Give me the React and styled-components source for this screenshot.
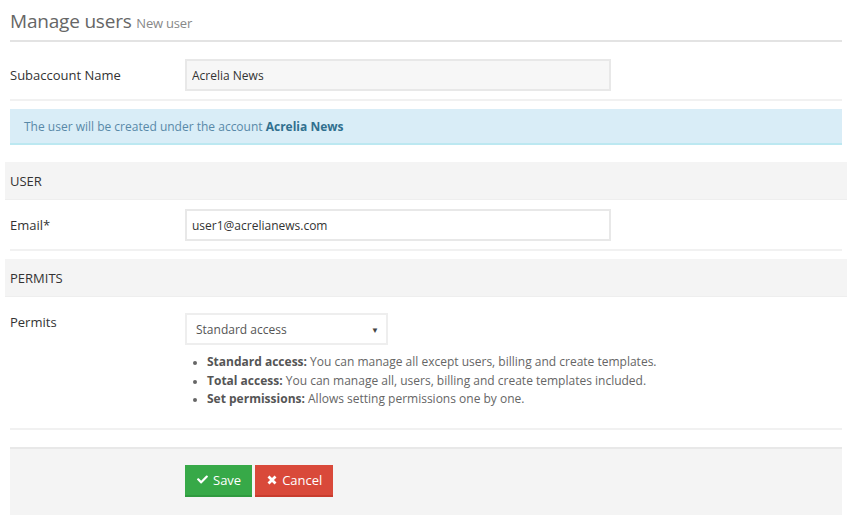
import React from 'react';
import styled, { createGlobalStyle } from 'styled-components';
import { FaCheck } from 'react-icons/fa';

const GlobalStyle = createGlobalStyle`
  body {
    margin: 0;
    background: #fff;
    font-family: 'Open Sans', 'Noto Sans', sans-serif;
    font-size: 13px;
    color: #333;
  }
`;

const Page = styled.div`
  padding: 0 3px 0 5px;
`;

const Header = styled.h1`
  margin: 0 5px;
  padding: 9px 0 5px;
  font-weight: 400;
  font-size: 19px;
  line-height: 24px;
  color: #666;
  border-bottom: 2px solid #e3e3e3;
  letter-spacing: -0.2px;
`;

const SubTitle = styled.small`
  font-size: 13px;
  color: #888;
  letter-spacing: -0.2px;
`;

const Row = styled.div`
  display: flex;
  align-items: ${p => (p.$top ? 'flex-start' : 'center')};
  margin: 0 5px;
  padding: ${p => p.$pad || '0'};
  border-bottom: 2px solid #f1f1f1;
`;

const Label = styled.label`
  width: 175px;
  flex-shrink: 0;
  color: #333;
  line-height: 18px;
`;

const Input = styled.input`
  box-sizing: border-box;
  width: 426px;
  height: 32px;
  padding: 0 5px;
  font-family: inherit;
  font-size: 12px;
  color: #333;
  background: ${p => (p.readOnly ? '#f7f7f7' : '#fff')};
  border: 2px solid #e8e8e8;
  outline: none;
`;

const Alert = styled.div`
  margin: 8px 5px 0;
  padding: 0 14px;
  height: 34px;
  display: flex;
  align-items: center;
  background: #d9edf7;
  border-bottom: 2px solid #bce8f1;
  color: #5889a8;
  font-size: 12px;
  b {
    color: #31708f;
    font-weight: 700;
  }
`;

const Section = styled.div`
  margin-top: ${p => p.$mt || '17px'};
  height: 37px;
  display: flex;
  align-items: center;
  padding: 0 5px;
  background: #f4f4f4;
  border-bottom: 1px solid #eee;
  color: #333;
`;

const Field = styled.div`
  display: flex;
  flex-direction: column;
`;

const SelectBox = styled.div`
  box-sizing: border-box;
  width: 203px;
  height: 32px;
  padding: 0 7px 0 9px;
  display: flex;
  align-items: center;
  justify-content: space-between;
  border: 2px solid #eee;
  color: #555;
  font-size: 12px;
  background: #fff;
`;

const Caret = styled.span`
  font-size: 8px;
  color: #444;
`;

const Help = styled.ul`
  margin: 8px 0 0;
  padding-left: 22px;
  color: #666;
  font-size: 12px;
  line-height: 18.5px;
  li::marker {
    font-size: 10px;
  }
  b {
    color: #555;
  }
`;

const Footer = styled.div`
  margin: 17px 5px 0;
  padding: 16px 0 18px 175px;
  background: #f4f4f4;
  border-top: 2px solid #e8e8e8;
  display: flex;
  gap: 3px;
`;

const Button = styled.button`
  height: 32px;
  padding: 0 11px 0 12px;
  border: none;
  font-family: inherit;
  font-size: 13px;
  color: #fff;
  background: ${p => p.$bg};
  border-bottom: 2px solid ${p => p.$edge};
  display: flex;
  align-items: center;
  gap: 5px;
  cursor: pointer;
  svg {
    font-size: 11px;
  }
`;

const Cross = () => (
  <svg width="10" height="10" viewBox="0 0 10 10">
    <path d="M1.5 1.5 L8.5 8.5 M8.5 1.5 L1.5 8.5" fill="none" stroke="#fff" strokeWidth="2.8" />
  </svg>
);

const App = () => (
  <Page>
    <GlobalStyle />
    <Header>
      Manage users <SubTitle>New user</SubTitle>
    </Header>

    <Row $pad="17px 0 8px">
      <Label>Subaccount Name</Label>
      <Input readOnly value="Acrelia News" />
    </Row>

    <Alert>
      <span>
        The user will be created under the account <b>Acrelia News</b>
      </span>
    </Alert>

    <Section>USER</Section>
    <Row $pad="9px 0 8px">
      <Label>Email*</Label>
      <Input defaultValue="user1@acrelianews.com" />
    </Row>

    <Section $mt="8px">PERMITS</Section>
    <Row $top $pad="16px 0 19px">
      <Label>Permits</Label>
      <Field>
        <SelectBox>
          <span>Standard access</span>
          <Caret>▼</Caret>
        </SelectBox>
        <Help>
          <li>
            <b>Standard access:</b> You can manage all except users, billing and create templates.
          </li>
          <li>
            <b>Total access:</b> You can manage all, users, billing and create templates included.
          </li>
          <li>
            <b>Set permissions:</b> Allows setting permissions one by one.
          </li>
        </Help>
      </Field>
    </Row>

    <Footer>
      <Button $bg="#37a948" $edge="#2f9a3f">
        <FaCheck /> Save
      </Button>
      <Button $bg="#d9493a" $edge="#c83c2e">
        <Cross /> Cancel
      </Button>
    </Footer>
  </Page>
);

export default App;
